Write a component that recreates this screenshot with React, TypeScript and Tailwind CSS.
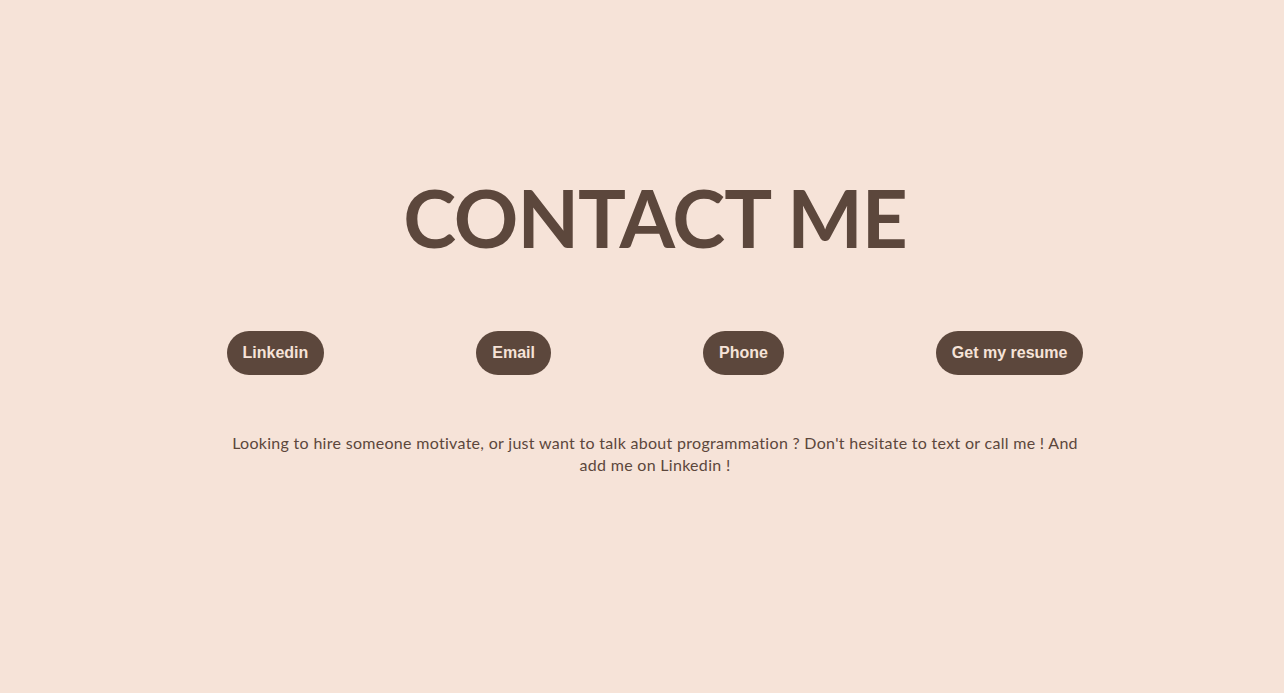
const links = ["Linkedin", "Email", "Phone", "Get my resume"];

const App = () => {
  return (
    <div className="min-h-[693px] w-full bg-[#f6e3d8] flex justify-center pl-[26px]">
      <div className="w-[857px] flex flex-col items-center pt-[177px]">
        <h1 className="font-['Lato',sans-serif] font-bold text-[80px] leading-[80px] text-[#5c473c] tracking-[-1px]">
          CONTACT ME
        </h1>
        <div className="w-full flex justify-between mt-[74px]">
          {links.map((label, idx) => (
            <button
              key={idx}
              className="h-[44px] px-4 rounded-full bg-[#5c473c] text-[#f6e3d8] font-['Liberation_Sans',Arial,sans-serif] font-bold text-base"
            >
              {label}
            </button>
          ))}
        </div>
        <p className="mt-[57px] text-center font-['Lato',sans-serif] text-[16px] leading-[22px] tracking-[0.3px] text-[#5c473c]">
          Looking to hire someone motivate, or just want to talk about programmation ? Don't hesitate to text or call me ! And add me on Linkedin !
        </p>
      </div>
    </div>
  );
};

export default App;
